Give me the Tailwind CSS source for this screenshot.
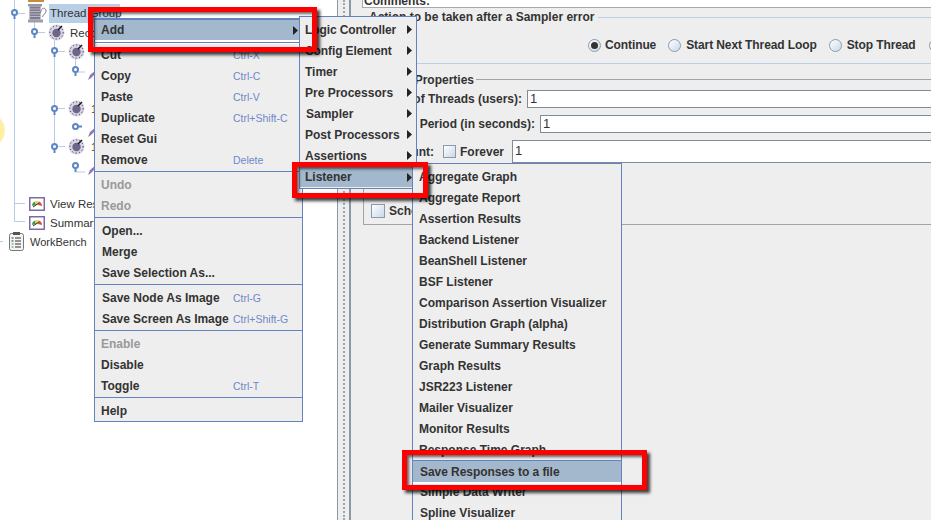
<!DOCTYPE html>
<html>
<head>
<meta charset="utf-8">
<script src="https://cdn.jsdelivr.net/npm/@tailwindcss/browser@4"></script>
</head>
<body class="m-0">
<div class="relative w-[931px] h-[520px] overflow-hidden flex bg-white text-[12px] leading-[14px] text-[#333] font-['Liberation_Sans',Arial,sans-serif]">

  <!-- tree pane -->
  <div class="relative w-[338px] h-full bg-white border-r border-[#8a99a8] shrink-0 overflow-hidden">
    <div class="absolute left-[-30px] top-[113px] w-[35px] h-[35px] rounded-full bg-[radial-gradient(circle,#fdeea0_60%,#fdf6c8_85%,#ffffff_100%)]"></div>
    <svg class="absolute left-0 top-0" width="110" height="260" fill="none">
      <g stroke="#b5cde6" stroke-width="1">
        <path d="M14.5 0V221.5H25M14.5 203.5H25M14.5 13.5H25M34.5 20V32.5H45M54.5 40V146.5H65M54.5 51.5H65M54.5 108.5H65M75.5 59V72M75.5 72H85M75.5 165V172H85M0 241.5H3"/>
      </g>
      <g stroke="#5d86c6" stroke-width="2">
        <circle cx="14.5" cy="12.5" r="2.5" fill="#fff"/><path d="M14.5 15V19"/>
        <circle cx="34.5" cy="31.5" r="2.5" fill="#fff"/><path d="M34.5 34V38"/>
        <circle cx="54.5" cy="50.5" r="2.5" fill="#fff"/><path d="M54.5 53V57"/>
        <circle cx="54.5" cy="108.5" r="2.5" fill="#fff"/><path d="M54.5 111V115"/>
        <circle cx="54.5" cy="146.5" r="2.5" fill="#fff"/><path d="M54.5 149V153"/>
        <circle cx="75.5" cy="69.5" r="2.5" fill="#fff"/><path d="M75.5 72V76"/>
        <circle cx="75.5" cy="126.5" r="2.5" fill="#fff"/><path d="M78 126.5H82"/>
        <circle cx="75.5" cy="165.5" r="2.5" fill="#fff"/><path d="M75.5 168V172"/>
      </g>
    </svg>
    <div class="relative">
      <div class="h-[4px] pl-[28px] overflow-hidden"><div class="w-[16px] h-[2px] bg-[#c98a3a]"></div></div>
      <!-- Thread Group -->
      <div class="h-[19px] flex items-center pl-[28px]">
        <svg width="19" height="19" viewBox="0 0 19 19" class="shrink-0"><rect x="0" y="0" width="14" height="2.5" fill="#9a96a8"/><rect x="1.5" y="2.5" width="11" height="13" fill="#7f7a8c"/><path d="M2 5H12M2 7.5H12M2 10H12M2 12.5H12" stroke="#b9b5c4"/><rect x="0" y="15.5" width="15" height="3" fill="#a09bad"/><path d="M12.5 9C13 3 18 3 18 7C18 10 15 10 14.5 13" stroke="#7f7a8c" fill="none"/></svg>
        <span class="ml-[2px] h-[19px] w-[71px] bg-[#b8cfe5] leading-[19px] pl-[1px] text-[11.5px] whitespace-nowrap">Thread Group</span>
      </div>
      <!-- Recording -->
      <div class="h-[19px] flex items-center pl-[48px]">
        <svg width="17" height="17" viewBox="0 0 17 17" class="shrink-0"><circle cx="8.5" cy="8.5" r="8" fill="#d9d3e6"/><circle cx="8.5" cy="8.5" r="6.6" fill="none" stroke="#222" stroke-dasharray="1 2.4"/><circle cx="8.5" cy="9" r="4.2" fill="#6e6688"/><path d="M10 6L14 2" stroke="#111" stroke-width="1.4"/></svg>
        <span class="ml-[5px] text-[11.5px] whitespace-nowrap">Recording Controller</span>
      </div>
      <div class="h-[19px] flex items-center pl-[68px]">
        <svg width="17" height="17" viewBox="0 0 17 17" class="shrink-0"><circle cx="8.5" cy="8.5" r="8" fill="#d9d3e6"/><circle cx="8.5" cy="8.5" r="6.6" fill="none" stroke="#222" stroke-dasharray="1 2.4"/><circle cx="8.5" cy="9" r="4.2" fill="#6e6688"/><path d="M10 6L14 2" stroke="#111" stroke-width="1.4"/></svg>
      </div>
      <div class="h-[19px] flex items-center pl-[88px]">
        <svg width="9" height="10" viewBox="0 0 9 10" class="shrink-0 mt-[9px]"><path d="M0 10L2 5L8 0L7 4L3 8Z" fill="#8a78b8"/></svg>
      </div>
      <div class="h-[19px]"></div>
      <div class="h-[19px] flex items-center pl-[68px]">
        <svg width="17" height="17" viewBox="0 0 17 17" class="shrink-0"><circle cx="8.5" cy="8.5" r="8" fill="#d9d3e6"/><circle cx="8.5" cy="8.5" r="6.6" fill="none" stroke="#222" stroke-dasharray="1 2.4"/><circle cx="8.5" cy="9" r="4.2" fill="#6e6688"/><path d="M10 6L14 2" stroke="#111" stroke-width="1.4"/></svg>
        <span class="ml-[6px] text-[11.5px] text-[#5a3a2a]">1</span>
      </div>
      <div class="h-[19px] flex items-center pl-[88px]">
        <svg width="9" height="10" viewBox="0 0 9 10" class="shrink-0 mt-[9px]"><path d="M0 10L2 5L8 0L7 4L3 8Z" fill="#8a78b8"/></svg>
      </div>
      <div class="h-[19px] flex items-center pl-[68px]">
        <svg width="17" height="17" viewBox="0 0 17 17" class="shrink-0"><circle cx="8.5" cy="8.5" r="8" fill="#d9d3e6"/><circle cx="8.5" cy="8.5" r="6.6" fill="none" stroke="#222" stroke-dasharray="1 2.4"/><circle cx="8.5" cy="9" r="4.2" fill="#6e6688"/><path d="M10 6L14 2" stroke="#111" stroke-width="1.4"/></svg>
        <span class="ml-[6px] text-[11.5px] text-[#5a3a2a]">1</span>
      </div>
      <div class="h-[19px] flex items-center pl-[88px]">
        <svg width="9" height="10" viewBox="0 0 9 10" class="shrink-0 mt-[9px]"><path d="M0 10L2 5L8 0L7 4L3 8Z" fill="#8a78b8"/></svg>
      </div>
      <div class="h-[19px]"></div>
      <!-- listeners -->
      <div class="h-[19px] flex items-center pl-[29px]">
        <svg width="16" height="14" viewBox="0 0 16 14" class="shrink-0"><rect x="0.75" y="0.75" width="14.5" height="12.5" fill="#fff" stroke="#7d6aa8" stroke-width="1.5"/><path d="M3 9A5 5 0 0 1 6 4.5L7 8Z" fill="#3a9a4a"/><path d="M6 4.5A5 5 0 0 1 10 4.5L9 8H7Z" fill="#e8d060"/><path d="M10 4.5A5 5 0 0 1 13 9L9 8Z" fill="#d8503a"/><path d="M4 10L10 6" stroke="#333"/></svg>
        <span class="ml-[5px] text-[11.5px] whitespace-nowrap">View Results Tree</span>
      </div>
      <div class="h-[19px] flex items-center pl-[29px]">
        <svg width="16" height="14" viewBox="0 0 16 14" class="shrink-0"><rect x="0.75" y="0.75" width="14.5" height="12.5" fill="#fff" stroke="#7d6aa8" stroke-width="1.5"/><path d="M3 9A5 5 0 0 1 6 4.5L7 8Z" fill="#3a9a4a"/><path d="M6 4.5A5 5 0 0 1 10 4.5L9 8H7Z" fill="#e8d060"/><path d="M10 4.5A5 5 0 0 1 13 9L9 8Z" fill="#d8503a"/><path d="M4 10L10 6" stroke="#333"/></svg>
        <span class="ml-[5px] text-[11.5px] whitespace-nowrap">Summary Report</span>
      </div>
      <div class="h-[19px] flex items-center pl-[9px]">
        <svg width="15" height="19" viewBox="0 0 15 19" class="shrink-0"><rect x="0.5" y="1.5" width="14" height="17" rx="2" fill="#f4f4f4" stroke="#777"/><rect x="4" y="0" width="7" height="3" fill="#555"/><path d="M6 6H12M6 9H12M6 12H12M6 15H12" stroke="#333"/><path d="M2.5 6H4.5M2.5 9H4.5" stroke="#333"/><path d="M2.5 12H4.5M2.5 15H4.5" stroke="#3a9a4a"/></svg>
        <span class="ml-[6px] text-[11px] whitespace-nowrap">WorkBench</span>
      </div>
    </div>
  </div>

  <!-- divider -->
  <div class="w-[13px] h-full bg-[#eeeeee] border-r-2 border-[#8a99a8] shrink-0 flex justify-center pl-[1px]">
    <div class="w-[2px] h-full border-l-2 border-dotted border-[#9aa8b5]"></div>
  </div>

  <!-- right pane -->
  <div class="flex-1 min-w-0 h-full bg-[#eeeeee] overflow-hidden pl-[11px]">
    <div class="h-[8px] bg-white border-l border-b border-[#aaaaaa] overflow-hidden font-bold">
      <div class="-mt-[6px] pl-[1px]">Comments:</div>
    </div>
    <!-- action fieldset -->
    <div class="relative mt-[9px] h-[47px] border-y border-[#b8cfe5] pt-[20px] font-bold whitespace-nowrap">
      <div class="absolute left-[7px] -top-[8px] bg-[#eeeeee] pr-[4px]">Action to be taken after a Sampler error</div>
      <div class="flex items-center pl-[226px] tracking-[-0.1px]">
        <span class="relative shrink-0 w-[13px] h-[13px] rounded-full border border-[#8a9bab] bg-[linear-gradient(135deg,#ffffff,#c9d8e8)] flex items-center justify-center"><span class="w-[7px] h-[7px] rounded-full bg-[#333]"></span></span>
        <span class="ml-[4px]">Continue</span>
        <span class="shrink-0 ml-[12px] w-[13px] h-[13px] rounded-full border border-[#8a9bab] bg-[linear-gradient(135deg,#ffffff,#c9d8e8)]"></span>
        <span class="ml-[5px]">Start Next Thread Loop</span>
        <span class="shrink-0 ml-[12px] w-[13px] h-[13px] rounded-full border border-[#8a9bab] bg-[linear-gradient(135deg,#ffffff,#c9d8e8)]"></span>
        <span class="ml-[5px]">Stop Thread</span>
        <span class="shrink-0 ml-[13px] w-[13px] h-[13px] rounded-full border border-[#8a9bab] bg-[linear-gradient(135deg,#ffffff,#c9d8e8)]"></span>
      </div>
    </div>
    <!-- thread properties -->
    <div class="relative mt-[15px] ml-[1px] h-[146px] border-y border-l border-[#a3a3a3] pt-[10px] font-bold whitespace-nowrap">
      <div class="absolute left-[6px] -top-[7px] bg-[#eeeeee] pr-[2px] w-[106px] text-right">Thread Properties</div>
      <div class="flex items-center h-[18px]">
        <span class="w-[158px] flex justify-end">Number of Threads (users):</span>
        <span class="ml-[5px] flex-1 h-full bg-white border-y border-l border-[#7f8c99] font-normal pl-[2px] text-[13px] leading-[16px]">1</span>
      </div>
      <div class="flex items-center h-[18px] mt-[7px]">
        <span class="w-[171px] flex justify-end">Ramp-Up Period (in seconds):</span>
        <span class="ml-[5px] flex-1 h-full bg-white border-y border-l border-[#7f8c99] font-normal pl-[2px] text-[13px] leading-[16px]">1</span>
      </div>
      <div class="flex items-center h-[23px] mt-[7px]">
        <span class="w-[70px] flex justify-end">Loop Count:</span>
        <span class="shrink-0 ml-[9px] w-[13px] h-[13px] border border-[#8a9bab] bg-[linear-gradient(135deg,#ffffff,#c9d8e8)]"></span>
        <span class="ml-[4px]">Forever</span>
        <span class="ml-[8px] flex-1 h-full bg-white border-y border-l border-[#7f8c99] font-normal pl-[2px] text-[13px] leading-[20px]">1</span>
      </div>
      <div class="flex items-center mt-[41px] pl-[7px]">
        <span class="shrink-0 w-[14px] h-[14px] border border-[#8a9bab] bg-[linear-gradient(135deg,#ffffff,#c9d8e8)]"></span>
        <span class="ml-[4px]">Scheduler</span>
      </div>
    </div>
  </div>

  <!-- main popup menu -->
  <div class="absolute left-[94px] top-[18px] w-[209px] bg-[#eeeeee] border border-[#6382bf] font-bold z-10">
    <div class="flex items-center justify-between h-[21px] pl-[6px] pr-[4px] bg-[#a3b8cc] border-t border-[#6382bf]"><span>Add</span><svg width="5" height="9" viewBox="0 0 5 9"><path d="M0 0L5 4.5L0 9Z" fill="#222"/></svg></div>
    <div class="h-[4px] bg-white"><div class="h-[2px]"></div><div class="h-px bg-[#6382bf]"></div></div>
    <div class="flex items-center h-[21px] pl-[6px]"><span class="w-[132px]">Cut</span><span class="font-normal text-[10.5px] text-[#6f88c8]">Ctrl-X</span></div>
    <div class="flex items-center h-[21px] pl-[6px]"><span class="w-[132px]">Copy</span><span class="font-normal text-[10.5px] text-[#6f88c8]">Ctrl-C</span></div>
    <div class="flex items-center h-[21px] pl-[6px]"><span class="w-[132px]">Paste</span><span class="font-normal text-[10.5px] text-[#6f88c8]">Ctrl-V</span></div>
    <div class="flex items-center h-[21px] pl-[6px]"><span class="w-[132px]">Duplicate</span><span class="font-normal text-[10.5px] text-[#6f88c8]">Ctrl+Shift-C</span></div>
    <div class="flex items-center h-[21px] pl-[6px]"><span class="w-[132px]">Reset Gui</span></div>
    <div class="flex items-center h-[21px] pl-[6px]"><span class="w-[132px]">Remove</span><span class="font-normal text-[10.5px] text-[#6f88c8]">Delete</span></div>
    <div class="h-[3px] mt-px border-t border-[#6382bf]"></div>
    <div class="flex items-center h-[21px] pl-[6px] text-[#999999]">Undo</div>
    <div class="flex items-center h-[21px] pl-[6px] text-[#999999]">Redo</div>
    <div class="h-[3px] mt-px border-t border-[#6382bf]"></div>
    <div class="flex items-center h-[21px] pl-[7px]">Open...</div>
    <div class="flex items-center h-[21px] pl-[7px]">Merge</div>
    <div class="flex items-center h-[21px] pl-[7px]">Save Selection As...</div>
    <div class="h-[3px] mt-px border-t border-[#6382bf]"></div>
    <div class="flex items-center h-[21px] pl-[7px]"><span class="w-[131px]">Save Node As Image</span><span class="font-normal text-[10.5px] text-[#6f88c8]">Ctrl-G</span></div>
    <div class="flex items-center h-[21px] pl-[7px]"><span class="w-[131px] tracking-[-0.05px]">Save Screen As Image</span><span class="font-normal text-[10.5px] text-[#6f88c8]">Ctrl+Shift-G</span></div>
    <div class="h-[3px] mt-px border-t border-[#6382bf]"></div>
    <div class="flex items-center h-[21px] pl-[6px] text-[#999999]">Enable</div>
    <div class="flex items-center h-[21px] pl-[6px]">Disable</div>
    <div class="flex items-center h-[21px] pl-[6px]"><span class="w-[132px]">Toggle</span><span class="font-normal text-[10.5px] text-[#6f88c8]">Ctrl-T</span></div>
    <div class="h-[3px] mt-px border-t border-[#6382bf]"></div>
    <div class="flex items-center h-[21px] pl-[6px]">Help</div>
  </div>

  <!-- Add submenu -->
  <div class="absolute left-[299px] top-[16px] w-[118px] pt-[2px] pb-px bg-[#eeeeee] border border-[#6382bf] font-bold z-20 whitespace-nowrap">
    <div class="flex items-center justify-between h-[21px] pl-[5px] pr-[4px]"><span class="tracking-[-0.1px]">Logic Controller</span><svg width="5" height="9" viewBox="0 0 5 9"><path d="M0 0L5 4.5L0 9Z" fill="#222"/></svg></div>
    <div class="flex items-center justify-between h-[21px] pl-[5px] pr-[4px]"><span class="tracking-[-0.1px]">Config Element</span><svg width="5" height="9" viewBox="0 0 5 9"><path d="M0 0L5 4.5L0 9Z" fill="#222"/></svg></div>
    <div class="flex items-center justify-between h-[21px] pl-[5px] pr-[4px]"><span>Timer</span><svg width="5" height="9" viewBox="0 0 5 9"><path d="M0 0L5 4.5L0 9Z" fill="#222"/></svg></div>
    <div class="flex items-center justify-between h-[21px] pl-[5px] pr-[4px]"><span>Pre Processors</span><svg width="5" height="9" viewBox="0 0 5 9"><path d="M0 0L5 4.5L0 9Z" fill="#222"/></svg></div>
    <div class="flex items-center justify-between h-[21px] pl-[6px] pr-[4px]"><span>Sampler</span><svg width="5" height="9" viewBox="0 0 5 9"><path d="M0 0L5 4.5L0 9Z" fill="#222"/></svg></div>
    <div class="flex items-center justify-between h-[21px] pl-[5px] pr-[4px]"><span>Post Processors</span><svg width="5" height="9" viewBox="0 0 5 9"><path d="M0 0L5 4.5L0 9Z" fill="#222"/></svg></div>
    <div class="flex items-center justify-between h-[21px] pl-[5px] pr-[4px]"><span>Assertions</span><svg width="5" height="9" viewBox="0 0 5 9"><path d="M0 0L5 4.5L0 9Z" fill="#222"/></svg></div>
    <div class="flex items-center justify-between h-[21px] pl-[5px] pr-[4px] bg-[#a3b8cc] border-t border-[#6382bf]"><span>Listener</span><svg width="5" height="9" viewBox="0 0 5 9"><path d="M0 0L5 4.5L0 9Z" fill="#222"/></svg></div>
  </div>

  <!-- Listener submenu -->
  <div class="absolute left-[412px] top-[163px] w-[210px] pt-[2px] bg-[#eeeeee] border border-[#6382bf] font-bold z-30 whitespace-nowrap">
    <div class="flex items-center h-[21px] pl-[6px]">Aggregate Graph</div>
    <div class="flex items-center h-[21px] pl-[6px]">Aggregate Report</div>
    <div class="flex items-center h-[21px] pl-[6px]">Assertion Results</div>
    <div class="flex items-center h-[21px] pl-[6px]">Backend Listener</div>
    <div class="flex items-center h-[21px] pl-[6px]">BeanShell Listener</div>
    <div class="flex items-center h-[21px] pl-[6px]">BSF Listener</div>
    <div class="flex items-center h-[21px] pl-[6px]">Comparison Assertion Visualizer</div>
    <div class="flex items-center h-[21px] pl-[6px]">Distribution Graph (alpha)</div>
    <div class="flex items-center h-[21px] pl-[6px]">Generate Summary Results</div>
    <div class="flex items-center h-[21px] pl-[6px]">Graph Results</div>
    <div class="flex items-center h-[21px] pl-[6px]">JSR223 Listener</div>
    <div class="flex items-center h-[21px] pl-[6px]">Mailer Visualizer</div>
    <div class="flex items-center h-[21px] pl-[6px]">Monitor Results</div>
    <div class="flex items-center h-[21px] pl-[6px]">Response Time Graph</div>
    <div class="flex items-center h-[21px] pl-[7px] bg-[#a3b8cc] border-t border-[#6382bf] border-b-2 border-b-white box-content tracking-[-0.05px]">Save Responses to a file</div>
    <div class="flex items-center h-[21px] pl-[7px] -mt-[3px]">Simple Data Writer</div>
    <div class="flex items-center h-[21px] pl-[7px]">Spline Visualizer</div>
  </div>

  <!-- red annotation boxes -->
  <div class="absolute left-[88px] top-[7px] w-[229px] h-[45px] border-[5px] border-[#ff0000] shadow-[3px_3px_3px_rgba(0,0,0,0.75),inset_2px_2px_3px_rgba(0,0,0,0.6)] z-40"></div>
  <div class="absolute left-[292px] top-[162px] w-[136px] h-[36px] border-[5px] border-[#ff0000] shadow-[3px_3px_3px_rgba(0,0,0,0.75),inset_2px_2px_3px_rgba(0,0,0,0.6)] z-40"></div>
  <div class="absolute left-[402px] top-[450px] w-[245px] h-[40px] border-[5px] border-[#ff0000] shadow-[3px_3px_3px_rgba(0,0,0,0.75),inset_2px_2px_3px_rgba(0,0,0,0.6)] z-40"></div>
</div>
</body>
</html>
